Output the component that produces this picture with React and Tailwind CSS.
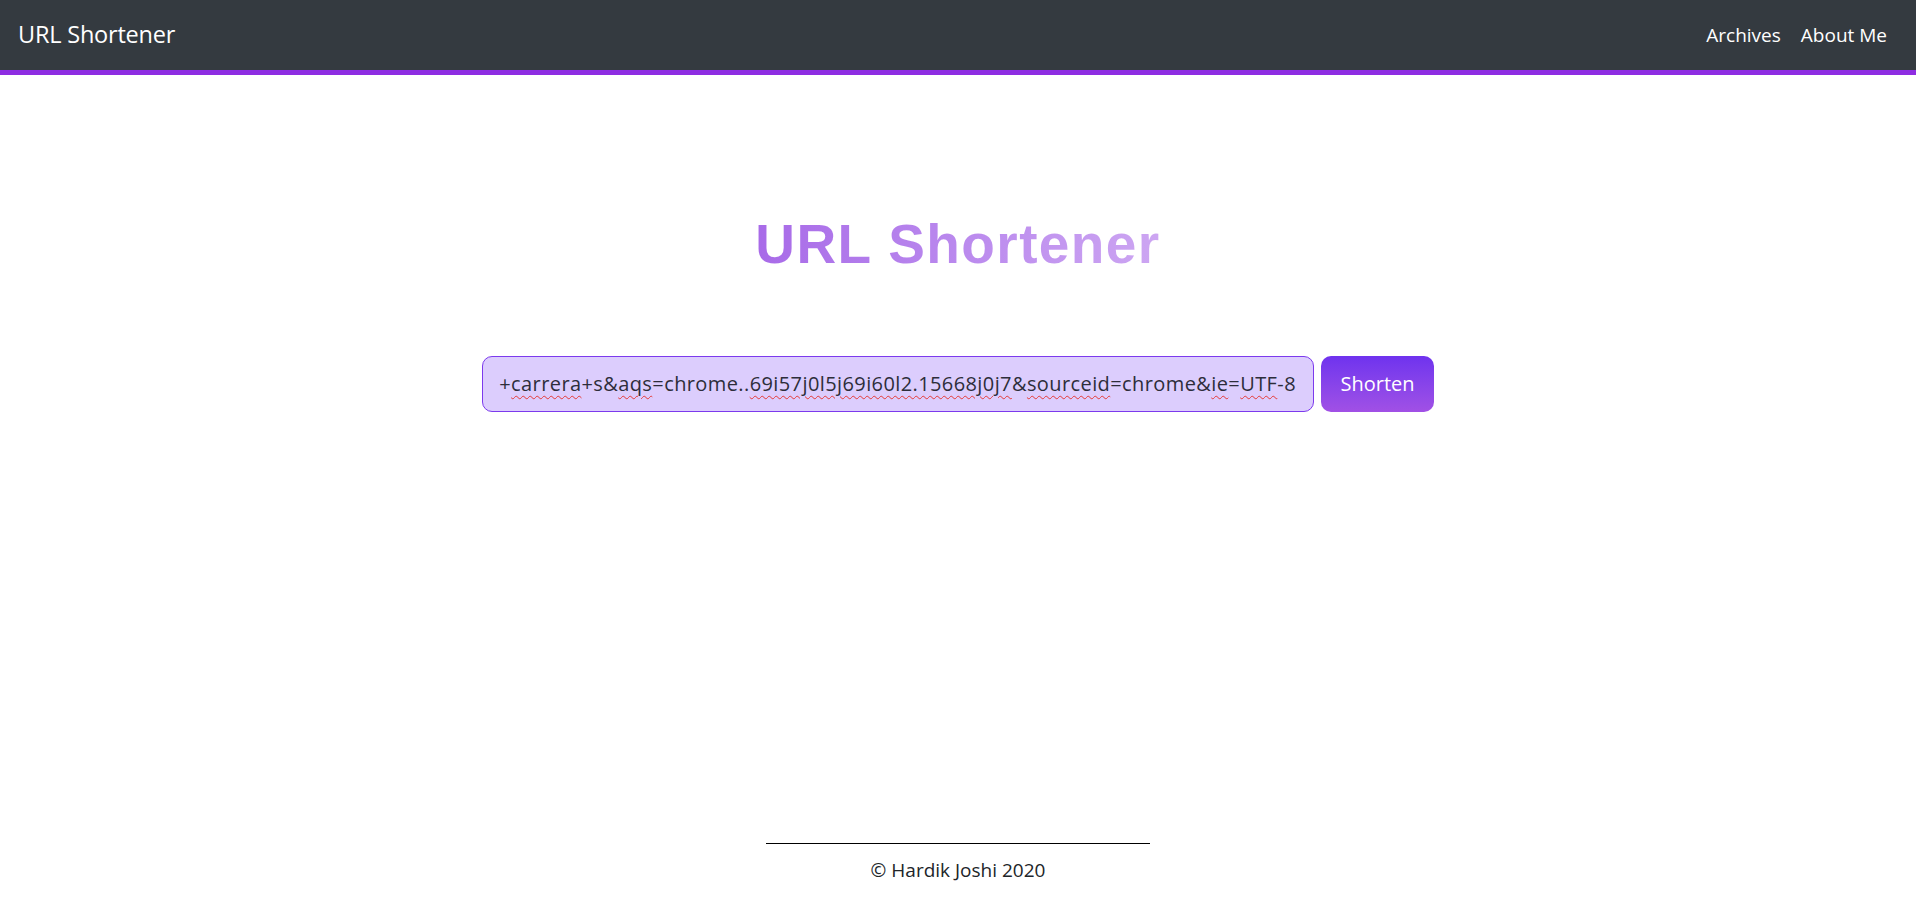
import { useState } from "react";

const segments = [
  { t: "+", bad: false },
  { t: "carrera", bad: true },
  { t: "+s&", bad: false },
  { t: "aqs", bad: true },
  { t: "=chrome..", bad: false },
  { t: "69i57j0l5j69i60l2.15668j0j7", bad: true },
  { t: "&", bad: false },
  { t: "sourceid", bad: true },
  { t: "=chrome&", bad: false },
  { t: "ie", bad: true },
  { t: "=", bad: false },
  { t: "UTF", bad: true },
  { t: "-8", bad: false },
];

function Navbar() {
  return (
    <nav className="h-[75px] bg-[#343a40] border-b-[5px] border-[#8e2de2] flex items-center justify-between px-[18px] font-['Open_Sans','Noto_Sans',sans-serif]">
      <a href="#" className="text-white text-[23.5px] tracking-[-0.2px] pb-[1px]">
        URL Shortener
      </a>
      <div className="flex items-center gap-[20px] text-white text-[19px] pr-[11px]">
        <a href="#">Archives</a>
        <a href="#">About Me</a>
      </div>
    </nav>
  );
}

function Shortener() {
  const [busy, setBusy] = useState(false);

  return (
    <main className="flex flex-col items-center">
      <h1 className="mt-[142px] text-[55px] leading-none font-bold tracking-[1.4px] font-['Liberation_Sans',Arial,sans-serif] bg-gradient-to-r from-[#a86ae8] to-[#cda6f2] bg-clip-text text-transparent">
        URL Shortener
      </h1>
      <form
        className="mt-[84px] flex items-center gap-[7px]"
        onSubmit={(e) => {
          e.preventDefault();
          setBusy(!busy);
        }}
      >
        <div className="w-[832px] h-[56px] rounded-[10px] border border-[#7c3aed] bg-[#dccdfd] flex items-center justify-end overflow-hidden px-[17px] whitespace-nowrap text-[#2d2d3a] text-[20px] tracking-[0.4px] font-['Open_Sans','Noto_Sans',sans-serif]">
          {segments.map((s, i) =>
            s.bad ? (
              <span
                key={i}
                className="underline decoration-wavy decoration-[#e53935] decoration-1 underline-offset-[4px]"
              >
                {s.t}
              </span>
            ) : (
              <span key={i}>{s.t}</span>
            )
          )}
        </div>
        <button
          type="submit"
          className="w-[113px] h-[56px] rounded-[10px] bg-gradient-to-b from-[#6f32ee] to-[#a150e5] text-white text-[20px] font-['Open_Sans','Noto_Sans',sans-serif]"
        >
          Shorten
        </button>
      </form>
    </main>
  );
}

function Footer() {
  return (
    <footer className="mt-auto flex flex-col items-center pb-[15px]">
      <div className="w-[384px] h-px bg-black" />
      <p className="mt-[12px] text-[19px] text-[#212529] font-['Open_Sans','Noto_Sans',sans-serif]">
        © Hardik Joshi 2020
      </p>
    </footer>
  );
}

export default function App() {
  return (
    <div className="min-h-screen bg-white flex flex-col">
      <Navbar />
      <Shortener />
      <Footer />
    </div>
  );
}
